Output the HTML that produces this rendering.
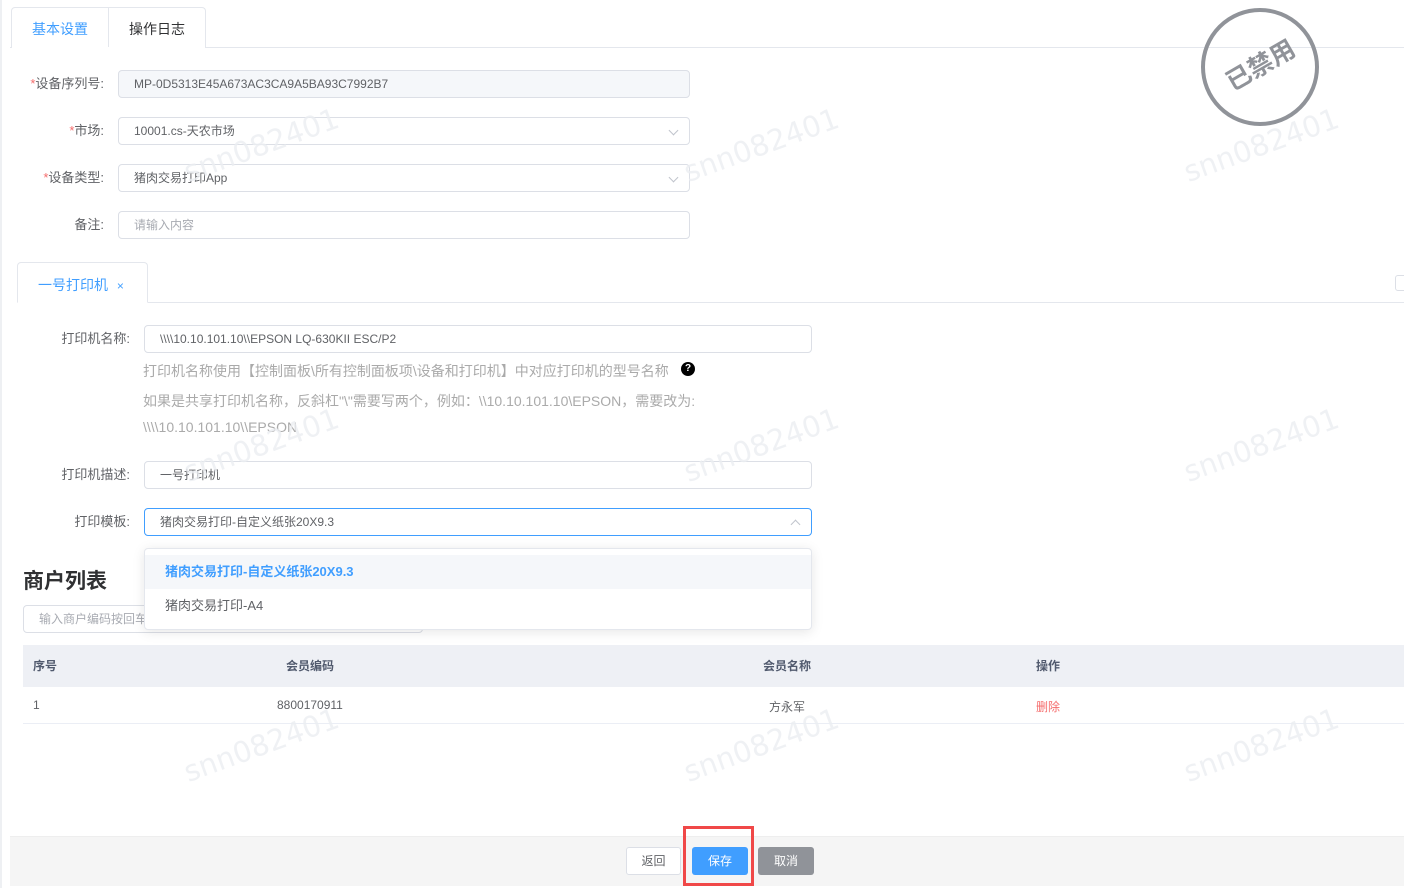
<!DOCTYPE html>
<html><head><meta charset="utf-8"><style>
*{box-sizing:border-box;margin:0;padding:0}
body{width:1404px;height:888px;background:#fff;font-family:"Liberation Sans","Noto Sans CJK SC",sans-serif;font-size:12px;color:#606266;position:relative;overflow:hidden}
.a{position:absolute}
.inp{position:absolute;border:1px solid #dcdfe6;border-radius:4px;height:28px;padding-left:15px;line-height:26px;font-size:12px;color:#606266;background:#fff}
.lbl{position:absolute;text-align:right;font-size:13px;color:#606266;line-height:28px}
.req{color:#f56c6c}
.chev{position:absolute;right:12px;top:9px;width:7px;height:7px;border-right:1px solid #c0c4cc;border-bottom:1px solid #c0c4cc;transform:rotate(45deg)}
.wm{position:absolute;font-size:29px;color:#eceef2;transform:rotate(-20deg);font-family:"DejaVu Sans",sans-serif;z-index:5;pointer-events:none;opacity:.8}
.help{position:absolute;left:143px;font-size:14px;color:#aaa}
</style></head><body>
<div class="a" style="left:0;top:0;width:2px;height:888px;background:#eef0f3"></div>
<div class="wm" style="left:180px;top:128px">snn082401</div>
<div class="wm" style="left:680px;top:128px">snn082401</div>
<div class="wm" style="left:1180px;top:128px">snn082401</div>
<div class="wm" style="left:180px;top:428px">snn082401</div>
<div class="wm" style="left:680px;top:428px">snn082401</div>
<div class="wm" style="left:1180px;top:428px">snn082401</div>
<div class="wm" style="left:180px;top:728px">snn082401</div>
<div class="wm" style="left:680px;top:728px">snn082401</div>
<div class="wm" style="left:1180px;top:728px">snn082401</div>

<div class="a" style="left:10px;top:47px;width:1394px;height:1px;background:#e4e7ed"></div>
<div class="a" style="left:11px;top:7px;width:195px;height:41px;border:1px solid #e4e7ed;border-bottom:none;border-radius:4px 4px 0 0;background:#fff"></div>
<div class="a" style="left:108px;top:7px;width:1px;height:40px;background:#e4e7ed"></div>
<div class="a" style="left:32px;top:19px;font-size:14px;color:#409eff">基本设置</div>
<div class="a" style="left:129px;top:19px;font-size:14px;color:#303133">操作日志</div>

<div class="lbl" style="left:0;width:104px;top:70px"><span class="req">*</span>设备序列号:</div>
<div class="inp" style="left:118px;top:70px;width:572px;background:#f5f7fa;color:#606266">MP-0D5313E45A673AC3CA9A5BA93C7992B7</div>
<div class="lbl" style="left:0;width:104px;top:117px"><span class="req">*</span>市场:</div>
<div class="inp" style="left:118px;top:117px;width:572px">10001.cs-天农市场<span class="chev"></span></div>
<div class="lbl" style="left:0;width:104px;top:164px"><span class="req">*</span>设备类型:</div>
<div class="inp" style="left:118px;top:164px;width:572px">猪肉交易打印App<span class="chev"></span></div>
<div class="lbl" style="left:0;width:104px;top:211px">备注:</div>
<div class="inp" style="left:118px;top:211px;width:572px;color:#a8abb2">请输入内容</div>

<div class="a" style="left:17px;top:302px;width:1387px;height:1px;background:#e4e7ed"></div>
<div class="a" style="left:17px;top:262px;width:131px;height:41px;border:1px solid #e4e7ed;border-bottom:1px solid #fff;border-radius:4px 4px 0 0;background:#fff"></div>
<div class="a" style="left:38px;top:275px;font-size:14px;color:#409eff">一号打印机 <span style="font-size:12px;margin-left:5px">×</span></div>
<div class="a" style="left:1395px;top:275px;width:12px;height:16px;border:1px solid #dcdfe6;border-radius:3px"></div>

<div class="lbl" style="left:0;width:130px;top:325px">打印机名称:</div>
<div class="inp" style="left:144px;top:325px;width:668px">\\\\10.10.101.10\\EPSON LQ-630KII ESC/P2</div>
<div class="help" style="top:361px">打印机名称使用【控制面板\所有控制面板项\设备和打印机】中对应打印机的型号名称</div>
<div class="a" style="left:681px;top:362px;width:14px;height:14px;border-radius:50%;background:#000;color:#fff;font-size:10px;font-weight:bold;text-align:center;line-height:14px">?</div>
<div class="help" style="top:391px">如果是共享打印机名称，反斜杠"\"需要写两个，例如：\\10.10.101.10\EPSON，需要改为:</div>
<div class="help" style="top:419px">\\\\10.10.101.10\\EPSON</div>

<div class="lbl" style="left:0;width:130px;top:461px">打印机描述:</div>
<div class="inp" style="left:144px;top:461px;width:668px">一号打印机</div>
<div class="lbl" style="left:0;width:130px;top:508px">打印模板:</div>
<div class="inp" style="left:144px;top:508px;width:668px;border-color:#409eff">猪肉交易打印-自定义纸张20X9.3<span class="chev" style="transform:rotate(225deg);top:12px"></span></div>

<div class="a" style="left:23px;top:565px;font-size:21px;font-weight:bold;color:#303133">商户列表</div>
<div class="inp" style="left:23px;top:605px;width:400px;color:#a8abb2">输入商户编码按回车</div>

<div class="a" style="left:144px;top:548px;width:668px;height:82px;border:1px solid #e4e7ed;border-radius:4px;background:#fff;box-shadow:0 2px 12px rgba(0,0,0,.1);z-index:3">
<div style="margin-top:6px;height:34px;line-height:34px;background:#f5f7fa;padding-left:20px;color:#409eff;font-weight:bold;font-size:13px">猪肉交易打印-自定义纸张20X9.3</div>
<div style="height:34px;line-height:34px;padding-left:20px;color:#606266;font-size:13px">猪肉交易打印-A4</div>
</div>

<div class="a" style="left:23px;top:645px;width:1381px;height:42px;background:#eef0f5"></div>
<div class="a" style="left:33px;top:657px;font-weight:bold;color:#515a6e">序号</div>
<div class="a" style="left:286px;top:657px;font-weight:bold;color:#515a6e">会员编码</div>
<div class="a" style="left:763px;top:657px;font-weight:bold;color:#515a6e">会员名称</div>
<div class="a" style="left:1036px;top:657px;font-weight:bold;color:#515a6e">操作</div>
<div class="a" style="left:33px;top:698px">1</div>
<div class="a" style="left:277px;top:698px">8800170911</div>
<div class="a" style="left:769px;top:698px">方永军</div>
<div class="a" style="left:1036px;top:698px;color:#f56c6c">删除</div>
<div class="a" style="left:23px;top:723px;width:1381px;height:1px;background:#ebeef5"></div>

<div class="a" style="left:10px;top:836px;width:1394px;height:50px;background:#f5f5f5;border-top:1px solid #eee"></div>
<div class="a" style="left:626px;top:847px;width:55px;height:28px;border:1px solid #dcdfe6;border-radius:3px;background:#fff;text-align:center;line-height:26px;color:#606266">返回</div>
<div class="a" style="left:692px;top:847px;width:56px;height:28px;border-radius:3px;background:#409eff;text-align:center;line-height:28px;color:#fff">保存</div>
<div class="a" style="left:758px;top:847px;width:56px;height:28px;border-radius:3px;background:#909399;text-align:center;line-height:28px;color:#fff">取消</div>
<div class="a" style="left:683px;top:826px;width:71px;height:60px;border:3px solid #f04848"></div>

<div class="a" style="left:1201px;top:8px;width:118px;height:118px;border:4px solid #909399;border-radius:50%"></div>
<div class="a" style="left:1212px;top:46px;width:96px;text-align:center;font-size:25px;font-weight:bold;color:#909399;transform:rotate(-30deg)">已禁用</div>
</body></html>
